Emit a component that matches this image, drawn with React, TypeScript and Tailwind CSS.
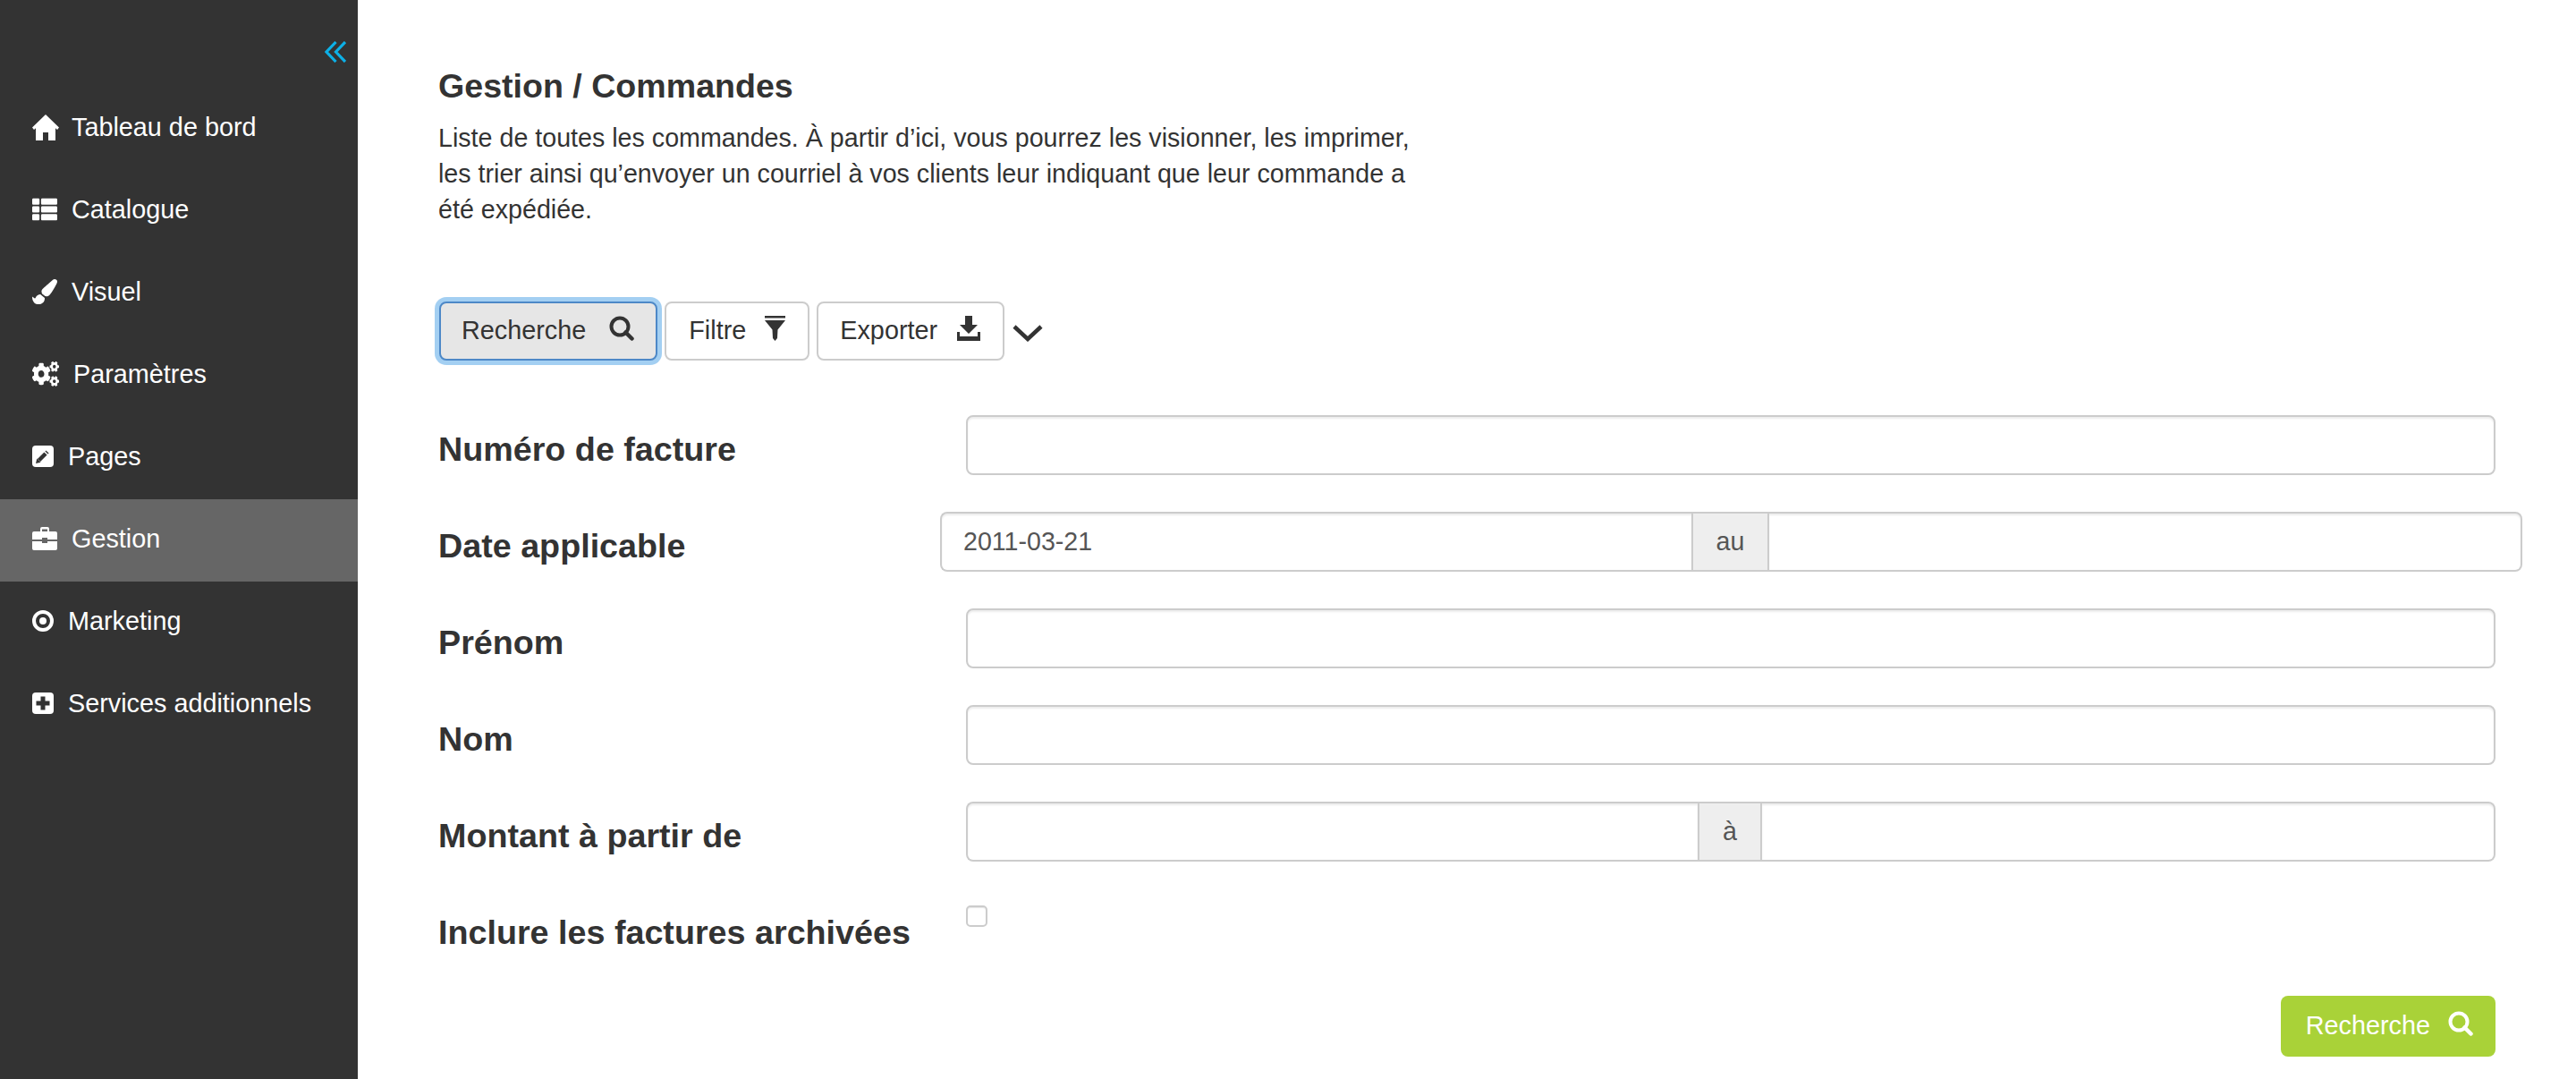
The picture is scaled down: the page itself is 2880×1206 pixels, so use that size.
import { FaThList, FaPaintBrush, FaCogs } from "react-icons/fa";

function Home() {
  return (
    <svg viewBox="0 0 30 29" className="w-[30px] h-[29px]" fill="white">
      <path d="M15 0L30 14.500L28 17L26 15.300V29H18V20H12V29H4V15.300L2 17L0 14.500Z" />
    </svg>
  );
}
function PencilSquare() {
  return (
    <svg viewBox="0 0 24 24" className="w-[24px] h-[24px]">
      <rect width="24" height="24" rx="4" fill="white" />
      <path d="M7.500 16.500L15 9" stroke="#333" strokeWidth="4.500" fill="none" />
      <path d="M4 20l1.300-5.500 4.200 4.200z" fill="#333" />
      <path d="M16 8l1-1" stroke="#333" strokeWidth="4.500" fill="none" />
    </svg>
  );
}
function Briefcase() {
  return (
    <svg viewBox="0 0 28 26" className="w-[28px] h-[26px]" fill="white">
      <path fillRule="evenodd" d="M11 0h6a2 2 0 0 1 2 2v3h-2V2.500h-6V5H9V2a2 2 0 0 1 2-2z" />
      <path d="M2 5h24a2 2 0 0 1 2 2v7H17v-2h-6v2H0V7a2 2 0 0 1 2-2z" />
      <path d="M0 16h11v2h6v-2h11v8a2 2 0 0 1-2 2H2a2 2 0 0 1-2-2z" />
    </svg>
  );
}
function DotCircle() {
  return (
    <svg viewBox="0 0 24 24" className="w-[24px] h-[24px]">
      <circle cx="12" cy="12" r="10" stroke="white" strokeWidth="4" fill="none" />
      <circle cx="12" cy="12" r="4" fill="white" />
    </svg>
  );
}
function PlusSquare() {
  return (
    <svg viewBox="0 0 24 24" className="w-[24px] h-[24px]">
      <rect width="24" height="24" rx="4" fill="white" />
      <path d="M9.500 4.500h5v5h5v5h-5v5h-5v-5h-5v-5h5z" fill="#333" />
    </svg>
  );
}
function Search() {
  return (
    <svg viewBox="0 0 28 28" className="mb-[6px] w-[28px] h-[28px]" fill="none" stroke="currentColor">
      <circle cx="12" cy="12" r="9.500" strokeWidth="4" />
      <path d="M18.500 18.500L25.500 25.500" strokeWidth="4.500" strokeLinecap="round" />
    </svg>
  );
}
function Filter() {
  return (
    <svg viewBox="0 0 23 28" className="mb-[6px] w-[23px] h-[28px]" fill="#333">
      <rect x="0" y="0" width="23" height="2.500" />
      <path d="M0 5h23L14.500 15.500 14 25l-2.500 3L9 25 8.500 15.500z" />
    </svg>
  );
}
function Download() {
  return (
    <svg viewBox="0 0 26 28" className="mb-[6px] w-[26px] h-[28px]" fill="#333">
      <path d="M9 0h8v10h6L13 20 3 10h6z" />
      <path d="M0 18h3v5h20v-5h3v5 5H0z" />
    </svg>
  );
}

const nav = [
  { label: "Tableau de bord", icon: <Home />, slot: "w-[44px] pb-[2px]" },
  { label: "Catalogue", icon: <FaThList className="w-[28px] h-[28px]" />, slot: "w-[44px] pb-[2px]" },
  { label: "Visuel", icon: <FaPaintBrush className="w-[28px] h-[28px]" />, slot: "w-[44px] pb-[2px]" },
  { label: "Paramètres", icon: <FaCogs preserveAspectRatio="none" className="w-[30px] h-[28px]" />, slot: "w-[46px] pb-[2px]" },
  { label: "Pages", icon: <PencilSquare />, slot: "w-[40px] pb-[2px]" },
  { label: "Gestion", icon: <Briefcase />, slot: "w-[44px] pb-[2px]", active: true },
  { label: "Marketing", icon: <DotCircle />, slot: "w-[40px] pb-[2px]" },
  { label: "Services additionnels", icon: <PlusSquare />, slot: "w-[40px] pb-[2px]" },
];

const inputCls = "block h-full min-w-0 bg-white text-[28.6px] text-[#555] px-[24px] outline-none border-2 border-[#ccc] shadow-[inset_0_2px_2px_rgba(0,0,0,0.075)]";

function Row({ label, children }: { label: string; children: React.ReactNode }) {
  return (
    <div className="flex h-[67px] mb-[41px]">
      <div className="w-[590px] shrink-0 pt-[18px] text-[37.7px] leading-[40px] font-bold text-[#333]">{label}</div>
      {children}
    </div>
  );
}

export default function App() {
  return (
    <div className="flex h-[1206px] w-[2880px] overflow-hidden bg-white font-['Liberation_Sans',Arial,sans-serif] text-[#333]">
      <aside className="w-[400px] shrink-0 bg-[#333] text-white">
        <div className="flex h-[98px] justify-end pt-[46px] pr-[13px]">
          <svg viewBox="0 0 24 24" className="w-[24px] h-[24px]" fill="none" stroke="#0db0e6" strokeWidth="3.200">
            <path d="M12.500 1L2 12l10.500 11M23 1L12.500 12 23 23" />
          </svg>
        </div>
        <nav>
          {nav.map((n) => (
            <div key={n.label} className={`flex h-[92px] items-center pl-[36px] pb-[2px] text-[28.8px] ${n.active ? "bg-[#666]" : ""}`}>
              <span className={`flex shrink-0 items-center ${n.slot}`}>{n.icon}</span>
              <span>{n.label}</span>
            </div>
          ))}
        </nav>
      </aside>
      <main className="flex-1 pl-[90px] pr-[90px]">
        <h1 className="mt-[74px] text-[37.6px] leading-[44px] font-bold">Gestion / Commandes</h1>
        <p className="mt-[16px] w-[1100px] text-[28.65px] leading-[40px]">
          Liste de toutes les commandes. À partir d’ici, vous pourrez les visionner, les imprimer, les trier ainsi qu’envoyer un courriel à vos clients leur indiquant que leur commande a été expédiée.
        </p>
        <div className="mt-[83px] flex h-[66px] items-stretch gap-[8px] pl-[1px]">
          <button className="flex items-center gap-[26px] rounded-[8px] border-2 border-[#4d88c7] bg-[#e6e6e6] pl-[23px] pr-[24px] text-[28.800px] shadow-[0_0_0_5px_rgba(102,175,233,0.6)]">
            Recherche <Search />
          </button>
          <button className="flex items-center gap-[21px] rounded-[8px] border-2 border-[#ccc] bg-white pl-[25px] pr-[25px] text-[28.800px]">
            Filtre <Filter />
          </button>
          <button className="flex items-center gap-[22px] rounded-[8px] border-2 border-[#ccc] bg-white pl-[24px] pr-[25px] text-[28.800px]">
            Exporter <Download />
          </button>
          <svg viewBox="0 0 34 20" className="ml-[1px] mt-[25px] w-[34px] h-[20px]" fill="none" stroke="#333" strokeWidth="4.500">
            <path d="M2 3l15 14L32 3" />
          </svg>
        </div>
        <div className="mt-[61px]">
          <Row label="Numéro de facture">
            <input readOnly className={`${inputCls} flex-1 rounded-[8px]`} />
          </Row>
          <Row label="Date applicable">
            <div className="-ml-[29px] -mr-[30px] flex flex-1">
              <input readOnly value="2011-03-21" className={`${inputCls} w-[840px] rounded-l-[8px] border-r-0`} />
              <span className="flex w-[87px] items-center justify-center border-2 border-[#ccc] bg-[#eee] text-[28.6px] text-[#555]">au</span>
              <input readOnly className={`${inputCls} flex-1 rounded-r-[8px] border-l-0`} />
            </div>
          </Row>
          <Row label="Prénom">
            <input readOnly className={`${inputCls} flex-1 rounded-[8px]`} />
          </Row>
          <Row label="Nom">
            <input readOnly className={`${inputCls} flex-1 rounded-[8px]`} />
          </Row>
          <Row label="Montant à partir de">
            <div className="flex flex-1">
              <input readOnly className={`${inputCls} w-[818px] rounded-l-[8px] border-r-0`} />
              <span className="flex w-[72px] items-center justify-center border-2 border-[#ccc] bg-[#eee] text-[28.6px] text-[#555]">à</span>
              <input readOnly className={`${inputCls} flex-1 rounded-r-[8px] border-l-0`} />
            </div>
          </Row>
          <div className="flex h-[67px]">
            <div className="w-[590px] shrink-0 pt-[18px] text-[37.7px] leading-[40px] font-bold">Inclure les factures archivées</div>
            <span className="mt-[8px] h-[24px] w-[24px] rounded-[5px] border-2 border-[#ccc] bg-white shadow-[inset_0_1px_1px_rgba(0,0,0,0.1)]" />
          </div>
        </div>
        <div className="mt-[42px] flex justify-end">
          <button className="flex h-[68px] items-center gap-[20px] rounded-[8px] bg-[#a9d238] pl-[28px] pr-[25px] text-[28.800px] text-white">
            Recherche <Search />
          </button>
        </div>
      </main>
    </div>
  );
}
